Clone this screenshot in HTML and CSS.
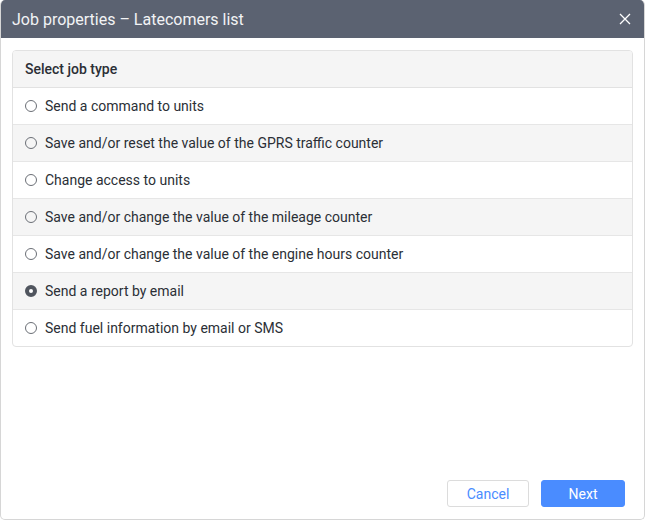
FILE: index.html
```html
<!DOCTYPE html>
<html>
<head>
<meta charset="utf-8">
<link rel="stylesheet" href="styles.css">
</head>
<body>
<div class="dialog">
  <div class="titlebar">
    <span class="title">Job properties – Latecomers list</span>
    <svg class="close" width="12" height="12" viewBox="0 0 12 12"><path d="M1 1L11 11M11 1L1 11" stroke="#fff" stroke-width="1.3"/></svg>
  </div>
  <div class="content">
    <div class="panel">
      <div class="panel-head">Select job type</div>
      <label class="row"><span class="radio"></span>Send a command to units</label>
      <label class="row alt"><span class="radio"></span>Save and/or reset the value of the GPRS traffic counter</label>
      <label class="row"><span class="radio"></span>Change access to units</label>
      <label class="row alt"><span class="radio"></span>Save and/or change the value of the mileage counter</label>
      <label class="row"><span class="radio"></span>Save and/or change the value of the engine hours counter</label>
      <label class="row alt"><span class="radio checked"></span>Send a report by email</label>
      <label class="row last"><span class="radio"></span>Send fuel information by email or SMS</label>
    </div>
  </div>
  <div class="footer">
    <button class="btn cancel">Cancel</button>
    <button class="btn next">Next</button>
  </div>
</div>
</body>
</html>
```
FILE: styles.css
```css
html, body { margin: 0; padding: 0; background: #fff; }
body { font-family: Roboto, "Liberation Sans", sans-serif; }
.dialog {
  box-sizing: border-box;
  width: 645px;
  height: 520px;
  border: 1px solid #d6d6d6;
  border-top: none;
  border-radius: 5px;
  overflow: hidden;
  display: flex;
  flex-direction: column;
}
.titlebar {
  height: 38px;
  background: #5b6271;
  display: flex;
  align-items: center;
  justify-content: space-between;
  padding: 0 13px 0 11px;
  flex: none;
}
.title { color: #f2f3f5; font-size: 16px; }
.close { display: block; }
.content { flex: 1; padding: 12px 11px 0 11px; }
.panel {
  border: 1px solid #e2e2e2;
  border-radius: 4px;
  overflow: hidden;
}
.panel-head {
  height: 37px;
  box-sizing: border-box;
  background: #f5f5f5;
  border-bottom: 1px solid #e2e2e2;
  font-size: 14px;
  font-weight: 500;
  color: #2b2f36;
  display: flex;
  align-items: center;
  padding-left: 12px;
}
.row {
  height: 37px;
  box-sizing: border-box;
  border-bottom: 1px solid #e6e6e6;
  display: flex;
  align-items: center;
  padding-left: 12px;
  font-size: 14px;
  color: #2b2f36;
}
.row.alt { background: #f5f5f5; }
.row.last { border-bottom: none; height: 36px; }
.radio {
  width: 12px;
  height: 12px;
  box-sizing: border-box;
  border: 1px solid #6b6f76;
  border-radius: 50%;
  margin-right: 8px;
  flex: none;
}
.radio.checked {
  border: 4px solid #50555e;
  background: #fff;
}
.footer {
  flex: none;
  display: flex;
  justify-content: flex-end;
  gap: 12px;
  padding: 0 19px 12px 0;
}
.btn {
  height: 27px;
  box-sizing: border-box;
  border-radius: 3px;
  font-family: Roboto, "Liberation Sans", sans-serif;
  font-size: 14px;
  padding: 0;
}
.cancel { width: 82px; background: #fff; border: 1px solid #dcdcdc; color: #4a8cff; }
.next { width: 84px; background: #4a8cff; border: 1px solid #4a8cff; color: #fff; }
```
